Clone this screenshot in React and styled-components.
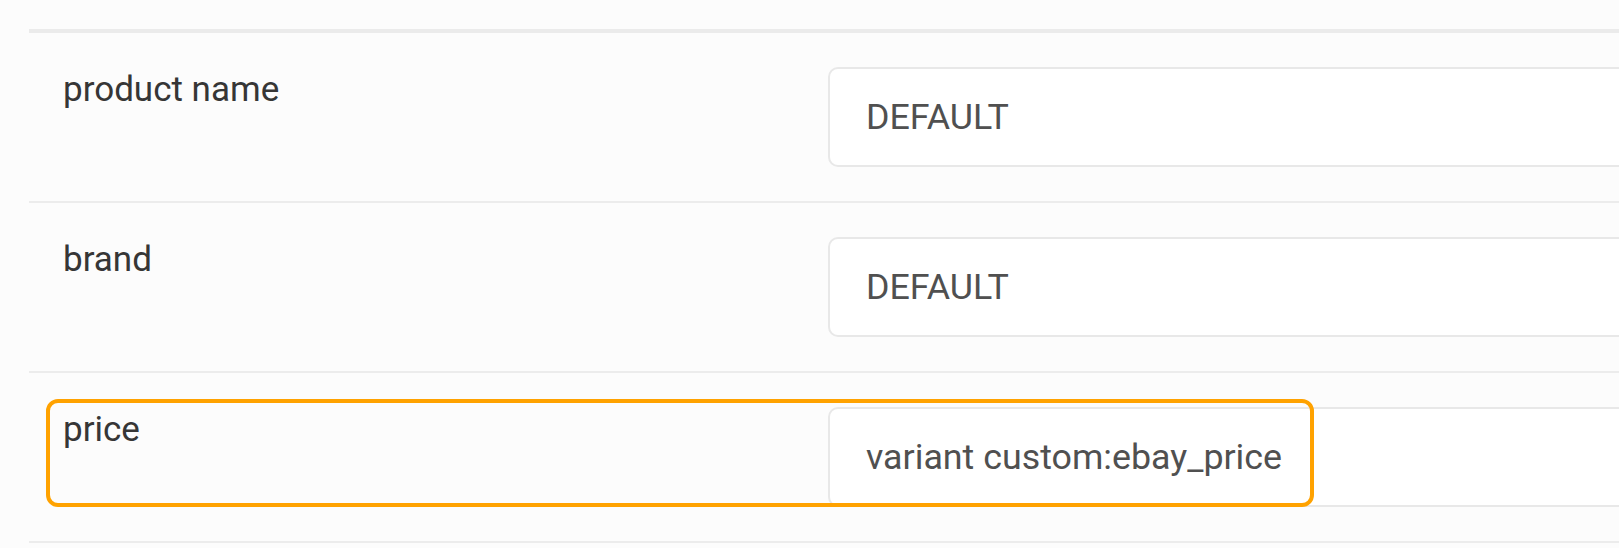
import React from "react";
import styled, { createGlobalStyle } from "styled-components";

const GlobalStyle = createGlobalStyle`
  html, body {
    margin: 0;
    padding: 0;
    background: #fcfcfc;
    overflow: hidden;
  }
  body {
    font-family: Roboto, "Liberation Sans", Arial, sans-serif;
  }
`;

const Page = styled.div`
  padding: 29px 0 0 29px;
`;

const Table = styled.div`
  width: 2200px;
  border-top: 4px solid #ebebeb;
`;

const Row = styled.div`
  position: relative;
  display: grid;
  grid-template-columns: 765px 1fr;
  border-bottom: 2px solid #ececec;
`;

const Label = styled.div`
  padding: 36px 34px 0;
  font-size: 35px;
  line-height: 41px;
  color: #363636;
`;

const ValueCell = styled.div`
  padding: 34px;
`;

const ValueBox = styled.div`
  box-sizing: border-box;
  height: 100px;
  display: flex;
  align-items: center;
  padding-left: 36px;
  border: 2px solid #e8e8e8;
  border-radius: 10px;
  background: #ffffff;
  font-size: 35.8px;
  color: #505050;
`;

const Highlight = styled.div`
  position: absolute;
  left: 17px;
  top: 26px;
  width: 1268px;
  height: 108px;
  box-sizing: border-box;
  border: 4px solid #ffa200;
  border-radius: 12px;
  pointer-events: none;
`;

const rows = [
  { label: "product name", value: "DEFAULT" },
  { label: "brand", value: "DEFAULT" },
  { label: "price", value: "variant custom:ebay_price", highlight: true },
];

export default function App() {
  return (
    <>
      <GlobalStyle />
      <Page>
        <Table>
          {rows.map((r) => (
            <Row key={r.label}>
              <Label>{r.label}</Label>
              <ValueCell>
                <ValueBox>{r.value}</ValueBox>
              </ValueCell>
              {r.highlight && <Highlight />}
            </Row>
          ))}
        </Table>
      </Page>
    </>
  );
}
